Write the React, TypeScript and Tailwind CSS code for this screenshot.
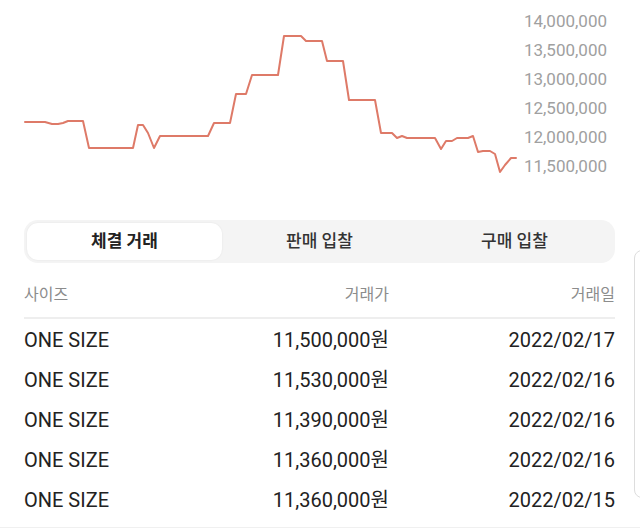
import { useState } from "react";

type Trade = { size: string; price: string; date: string };

const trades: Trade[] = [
  { size: "ONE SIZE", price: "11,500,000원", date: "2022/02/17" },
  { size: "ONE SIZE", price: "11,530,000원", date: "2022/02/16" },
  { size: "ONE SIZE", price: "11,390,000원", date: "2022/02/16" },
  { size: "ONE SIZE", price: "11,360,000원", date: "2022/02/16" },
  { size: "ONE SIZE", price: "11,360,000원", date: "2022/02/15" },
];

const yLabels = ["14,000,000", "13,500,000", "13,000,000", "12,500,000", "12,000,000", "11,500,000"];

// 시세 라인 (px 좌표 그대로)
const points = [
  [25, 122], [45, 122], [52, 124], [58, 124], [63, 123], [68, 121], [83, 121], [89, 148], [133, 148],
  [138, 125], [143, 125], [148, 133], [154, 148], [160, 136], [208, 136], [214, 123], [230, 123],
  [236, 94], [246, 94], [252, 75], [278, 75], [284, 36], [301, 36], [306, 41], [322, 41], [327, 61],
  [343, 61], [349, 100], [375, 100], [381, 133], [392, 133], [397, 138], [402, 136], [407, 138],
  [435, 138], [441, 149], [446, 141], [452, 141], [457, 138], [468, 138], [473, 136], [478, 152],
  [483, 151], [490, 151], [495, 154], [500, 172], [505, 165], [511, 158], [516, 158],
];

const TABS = ["체결 거래", "판매 입찰", "구매 입찰"];

const font = { fontFamily: 'Roboto, "Noto Sans CJK KR", sans-serif' };

export default function App() {
  const [tab, setTab] = useState(0);

  return (
    <div className="relative w-[640px] h-[528px] overflow-hidden bg-white" style={font}>
      {/* 차트 */}
      <div className="flex h-[200px]">
        <svg width="520" height="200" className="shrink-0">
          <polyline
            points={points.map((p) => p.join(",")).join(" ")}
            fill="none"
            stroke="#de7a68"
            strokeWidth="2"
            strokeLinejoin="round"
            strokeLinecap="round"
          />
        </svg>
        <div className="flex-1 pr-[33px] pt-[7px] text-right text-[17px] leading-[29px] text-[#a0a0a0]">
          {yLabels.map((l) => (
            <div key={l}>{l}</div>
          ))}
        </div>
      </div>

      <div className="pl-[24px] pr-[25px]">
        {/* 탭 */}
        <div className="mt-[20px] flex h-[43px] rounded-[14px] bg-[#f4f4f4] p-[3px]">
          {TABS.map((t, i) => (
            <button
              key={t}
              onClick={() => setTab(i)}
              className={
                i === tab
                  ? "flex-1 rounded-[11px] bg-white text-[17px] font-bold text-[#222] shadow-[0_0_2px_rgba(0,0,0,0.08)]"
                  : "flex-1 rounded-[11px] text-[17px] font-medium text-[#333]"
              }
            >
              {t}
            </button>
          ))}
        </div>

        {/* 헤더 */}
        <div className="mt-[20px] grid grid-cols-[200px_165px_1fr] border-b-2 border-[#eeeeee] pb-[10px] text-[16px] leading-[24px] text-[#8c8c8c]">
          <div>사이즈</div>
          <div className="text-right">거래가</div>
          <div className="text-right">거래일</div>
        </div>

        {/* 거래 내역 */}
        <div className="pt-[1px]">
          {trades.map((r, i) => (
            <div key={i} className="grid h-[40px] grid-cols-[200px_165px_1fr] items-center text-[20px] text-[#222]">
              <div>{r.size}</div>
              <div className="text-right">{r.price}</div>
              <div className="text-right">{r.date}</div>
            </div>
          ))}
        </div>
      </div>

      {/* 오른쪽 가장자리 패널 */}
      <div className="absolute left-[634px] top-[250px] h-[248px] w-[20px] rounded-l-[8px] border border-[#dddddd] bg-white" />
      <div className="absolute bottom-0 left-0 h-[1px] w-full bg-[#f0f0f0]" />
    </div>
  );
}
